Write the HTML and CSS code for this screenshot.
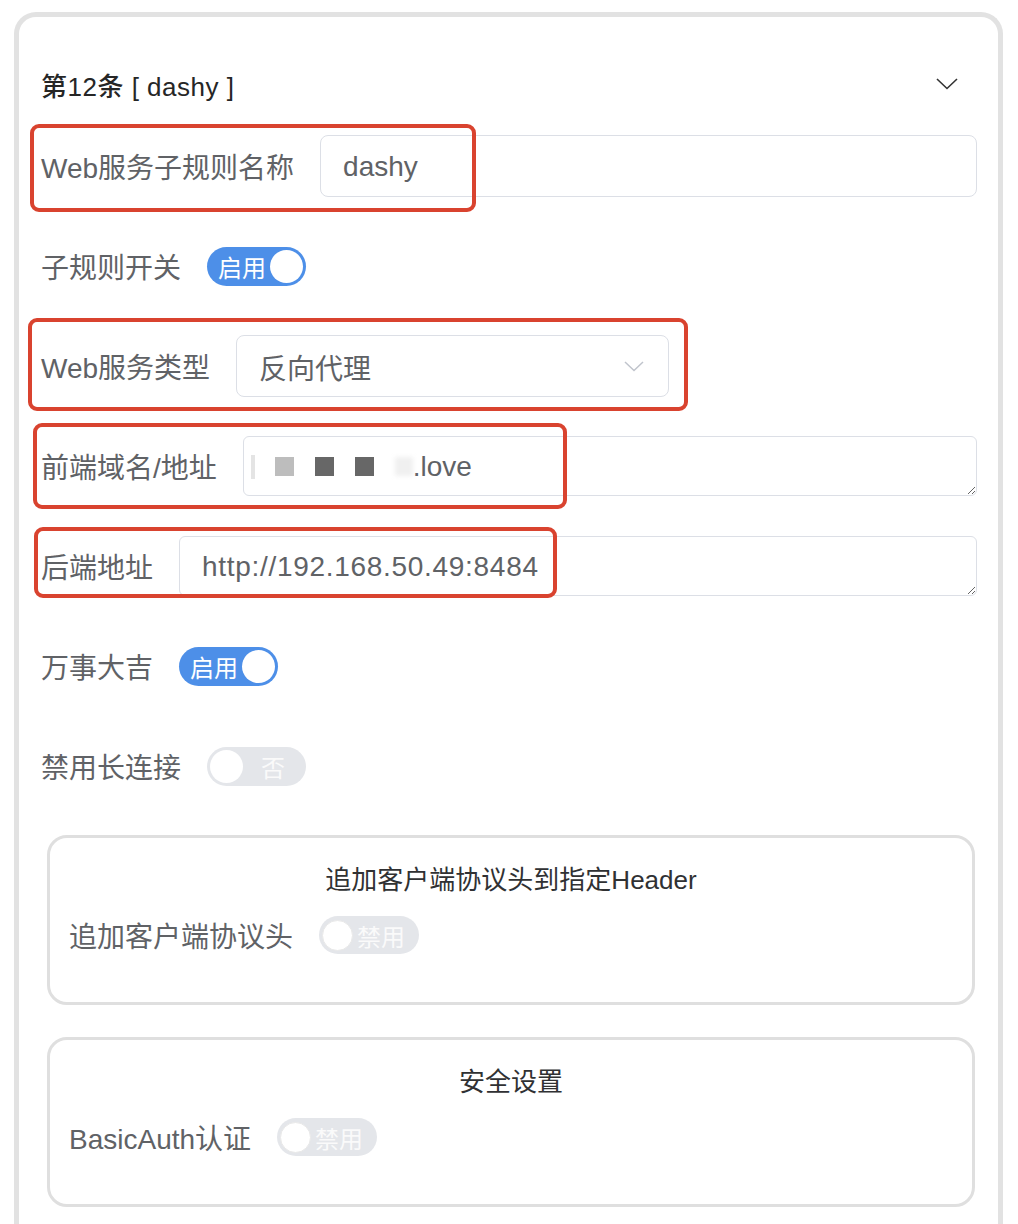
FILE: index.html
```html
<!DOCTYPE html>
<html lang="zh-CN">
<head>
    <meta charset="UTF-8">
    <meta name="viewport" content="width=device-width, initial-scale=1.0">
    <title>Web服务子规则</title>
    <link rel="stylesheet" href="styles.css">
</head>
<body>
    <div class="card">
        <div class="card-head">
            <span class="card-title">第12条 [ dashy ]</span>
            <svg class="head-arrow" width="22" height="12" viewBox="0 0 22 12"><path d="M1 1 L11 10.5 L21 1" fill="none" stroke="#333" stroke-width="1.6"/></svg>
        </div>

        <div class="form-item">
            <label class="label">Web服务子规则名称</label>
            <div class="input">dashy</div>
            <span class="mark mark-name"></span>
        </div>

        <div class="form-item">
            <label class="label">子规则开关</label>
            <span class="switch on"><span class="switch-text">启用</span><span class="knob"></span></span>
        </div>

        <div class="form-item">
            <label class="label">Web服务类型</label>
            <div class="input select">
                <span>反向代理</span>
                <svg width="20" height="11" viewBox="0 0 20 11"><path d="M1 1 L10 9.5 L19 1" fill="none" stroke="#c0c4cc" stroke-width="1.5"/></svg>
            </div>
            <span class="mark mark-type"></span>
        </div>

        <div class="form-item">
            <label class="label">前端域名/地址</label>
            <div class="input textarea">
                <span class="blur faint"></span><span class="blur light"></span><span class="blur dark"></span><span class="blur dark"></span><span class="blur ghost"></span><span class="domain">.love</span>
            </div>
            <span class="mark mark-front"></span>
        </div>

        <div class="form-item">
            <label class="label">后端地址</label>
            <div class="input textarea url">http://192.168.50.49:8484</div>
            <span class="mark mark-back"></span>
        </div>

        <div class="form-item">
            <label class="label">万事大吉</label>
            <span class="switch on"><span class="switch-text">启用</span><span class="knob"></span></span>
        </div>

        <div class="form-item">
            <label class="label">禁用长连接</label>
            <span class="switch off"><span class="knob"></span><span class="switch-text">否</span></span>
        </div>

        <div class="sub-card">
            <div class="sub-title">追加客户端协议头到指定Header</div>
            <div class="form-item sub-item">
                <label class="label">追加客户端协议头</label>
                <span class="switch off small"><span class="knob"></span><span class="switch-text">禁用</span></span>
            </div>
        </div>

        <div class="sub-card">
            <div class="sub-title">安全设置</div>
            <div class="form-item sub-item">
                <label class="label">BasicAuth认证</label>
                <span class="switch off small"><span class="knob"></span><span class="switch-text">禁用</span></span>
            </div>
        </div>
    </div>
</body>
</html>
```

FILE: styles.css
```css
* {
    margin: 0;
    padding: 0;
    box-sizing: border-box;
}

body {
    background: #fff;
    font-family: "Liberation Sans", "Noto Sans CJK SC", sans-serif;
    color: #606266;
}

.card {
    margin: 12px 0 0 14px;
    width: 989px;
    height: 1220px;
    border: 5px solid #e2e2e2;
    border-bottom: none;
    border-radius: 22px 22px 0 0;
    padding: 0 21px 0 22px;
    background: #fff;
}

.card-head {
    display: flex;
    justify-content: space-between;
    align-items: center;
    height: 56px;
    margin-top: 39px;
    margin-bottom: 23px;
}

.card-title {
    font-size: 26px;
    font-weight: 500;
    color: #262626;
    letter-spacing: 0.5px;
}

.head-arrow {
    margin-right: 19px;
}

.form-item {
    position: relative;
    display: flex;
    align-items: center;
    height: 62px;
    margin-bottom: 38px;
}

.label {
    font-size: 28px;
    color: #606266;
    margin-right: 26px;
    white-space: nowrap;
}

.input {
    flex: 1;
    height: 62px;
    display: flex;
    align-items: center;
    padding: 1px 21px 0 22px;
    border: 1px solid #dcdfe6;
    border-radius: 8px;
    font-size: 28px;
    color: #606266;
    background: #fff;
}

.select {
    flex: none;
    width: 433px;
    justify-content: space-between;
    padding-right: 24px;
}

.textarea {
    height: 60px;
    border-radius: 6px;
    resize: vertical;
    overflow: hidden;
}

.url {
    letter-spacing: 0.7px;
}

.blur {
    display: inline-block;
    width: 19px;
    height: 19px;
    margin-right: 21px;
    filter: blur(0.6px);
}

.blur.faint {
    width: 4px;
    height: 24px;
    margin-left: -15px;
    margin-right: 20px;
    background: #e4e4e4;
}

.blur.light {
    background: #bdbdbd;
}

.blur.dark {
    background: #676767;
}

.blur.ghost {
    width: 18px;
    background: #f0f0f0;
    margin-right: 0;
    filter: blur(2px);
}

.mark {
    position: absolute;
    border: 4px solid #d9432f;
    border-radius: 9px;
    pointer-events: none;
}

.mark-name {
    left: -11px;
    top: -11px;
    width: 446px;
    height: 88px;
}

.mark-type {
    left: -13px;
    top: -17px;
    width: 660px;
    height: 93px;
}

.mark-front {
    left: -8px;
    top: -12px;
    width: 534px;
    height: 86px;
}

.mark-back {
    left: -7px;
    top: -8px;
    width: 523px;
    height: 71px;
}

.switch {
    display: flex;
    align-items: center;
    width: 99px;
    height: 39px;
    padding: 3px;
    border-radius: 20px;
    font-size: 24px;
    color: #fff;
}

.switch.on {
    background: #4d8fe8;
}

.switch.on .switch-text {
    flex: 1;
    padding-left: 8px;
}

.switch.off {
    background: #e4e6ea;
}

.switch.off .switch-text {
    flex: 1;
    text-align: center;
    color: #fafafa;
}

.knob {
    width: 33px;
    height: 33px;
    border-radius: 50%;
    background: #fff;
}

.switch.small {
    width: 100px;
    height: 38px;
}

.switch.small .knob {
    width: 31px;
    height: 31px;
    border: 1px solid #e9e9e9;
}

.switch.small .switch-text {
    text-align: left;
    padding-left: 4px;
}

.sub-card {
    height: 170px;
    margin: 0 2px 32px 6px;
    border: 3px solid #dfdfdf;
    border-radius: 20px;
    padding: 21px 19px 0;
}

.sub-title {
    text-align: center;
    font-size: 26px;
    line-height: 42px;
    color: #303133;
}

.sub-item {
    margin-top: 3px;
    margin-bottom: 0;
}
```
